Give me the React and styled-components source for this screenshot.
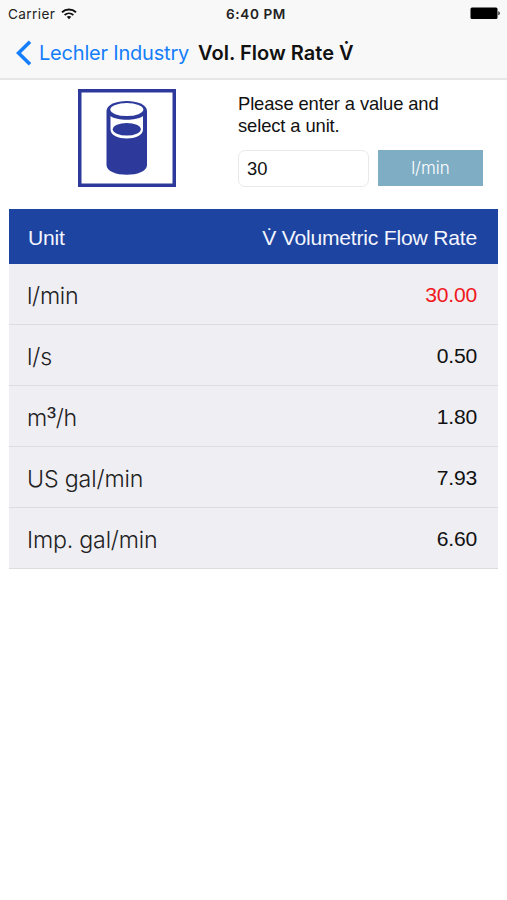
import React, { useState } from "react";
import styled, { createGlobalStyle } from "styled-components";

const GlobalStyle = createGlobalStyle`
	* {
		box-sizing: border-box;
	}

	body {
		margin: 0;
		background: #fff;
		font-family: "Liberation Sans", Arial, sans-serif;
		color: #111;
	}
`;

const Screen = styled.div`
	width: 507px;
	height: 900px;
	overflow: hidden;
	background: #fff;
`;

const TopArea = styled.header`
	height: 80px;
	background: #f8f8f8;
	border-bottom: 2px solid #e6e6e6;
	font-family: Inter, sans-serif;
`;

const StatusBar = styled.div`
	display: grid;
	grid-template-columns: 1fr auto 1fr;
	align-items: center;
	height: 27px;
	padding: 0 7px 0 8px;
	font-size: 13.6px;
	color: #222;
`;

const Carrier = styled.div`
	display: flex;
	align-items: center;
	gap: 6px;
	letter-spacing: 0.4px;
`;

const Clock = styled.div`
	font-weight: 600;
	letter-spacing: 0.6px;
	padding-left: 4px;
`;

const Battery = styled.svg`
	justify-self: end;
`;

const NavBar = styled.nav`
	display: flex;
	align-items: center;
	height: 51px;
	padding-left: 16px;
`;

const BackButton = styled.button`
	display: flex;
	align-items: center;
	gap: 7px;
	width: 182px;
	padding: 0;
	border: none;
	background: none;
	font: 400 20px Inter, sans-serif;
	letter-spacing: ${(props) => props.$tracking}px;
	white-space: nowrap;
	color: #147efb;
`;

const PageTitle = styled.h1`
	margin: 0;
	font-size: 20px;
	font-weight: 600;
	letter-spacing: 0.03px;
	white-space: nowrap;
	color: #111;
`;

const Entry = styled.section`
	display: flex;
	height: 129px;
	padding: 9px 0 0 78px;
`;

const Form = styled.div`
	width: 245px;
	margin-left: 62px;
	padding-top: 4px;
`;

const Prompt = styled.p`
	margin: 0 0 14px;
	font-size: 18.4px;
	line-height: 21.5px;
	letter-spacing: -0.12px;
`;

const Fields = styled.div`
	display: flex;
	gap: 9px;
`;

const ValueInput = styled.input`
	width: 131px;
	height: 37px;
	padding: 0 8px;
	border: 1px solid #e9e9e9;
	border-radius: 7px;
	outline: none;
	background: #fff;
	font: 18.4px "Liberation Sans", Arial, sans-serif;
	color: #111;
`;

const UnitButton = styled.button`
	width: 105px;
	height: 36px;
	padding: 0;
	border: none;
	background: #7eadc4;
	font: 300 17px Inter, "Liberation Sans", sans-serif;
	color: #fff;
`;

const Table = styled.section`
	width: 489px;
	margin-left: 9px;
`;

const TableHead = styled.div`
	display: flex;
	justify-content: space-between;
	align-items: center;
	height: 55px;
	padding: 2px 21px 0 19px;
	background: #1d44a0;
	font-size: 21.1px;
	letter-spacing: -0.2px;
	color: #f4f6ff;
`;

const Row = styled.div`
	display: flex;
	justify-content: space-between;
	align-items: center;
	height: 61px;
	padding: 2px 21px 0 18px;
	border-bottom: 1px solid #dddde1;
	background: #efeef3;
`;

const UnitName = styled.span`
	padding-top: 2px;
	font: 300 23.2px Inter, "Liberation Sans", sans-serif;
	letter-spacing: ${(props) => props.$tracking}px;
	color: #222;
`;

const Power = styled.span`
	font-family: "Liberation Sans", Arial, sans-serif;
	font-size: 27px;
	line-height: 1px;
`;

const Amount = styled.span`
	font-size: 21.1px;
	letter-spacing: -0.2px;
	color: ${(props) => (props.$active ? "#f01820" : "#111")};
`;

const rows = [
	{ unit: "l/min", amount: "30.00", tracking: -0.3 },
	{ unit: "l/s", amount: "0.50", tracking: -0.1 },
	{ unit: <>m<Power>³</Power>/h</>, amount: "1.80", tracking: -0.3 },
	{ unit: "US gal/min", amount: "7.93", tracking: -0.15 },
	{ unit: "Imp. gal/min", amount: "6.60", tracking: -0.2 },
];

function WifiIcon() {
	return (
		<svg width="16" height="12" viewBox="0 0 16 12" fill="none" stroke="#111">
			<path d="M1 4.2C5 .6 11 .6 15 4.2" strokeWidth="2" />
			<path d="M3.6 7C6.2 4.7 9.8 4.7 12.4 7" strokeWidth="1.8" />
			<path d="M5.7 8.8C7.1 7.6 8.9 7.6 10.3 8.8L8 11.2Z" fill="#111" stroke="none" />
		</svg>
	);
}

function GlassIcon() {
	return (
		<svg width="98" height="98" viewBox="0 0 98 98">
			<rect x="1.75" y="1.75" width="94.5" height="94.5" fill="#fff" stroke="#2e3a9b" strokeWidth="3.5" />
			<path d="M28.5 22C28.5 8.5 69 8.5 69 22V76C69 89 28.5 89 28.5 76Z" fill="#2e3a9b" />
			<ellipse cx="48.8" cy="20.6" rx="16.5" ry="6.5" fill="#fff" />
			<path d="M32.5 27C39 32 58.5 32 65 27V40.5C65 52.5 32.5 52.5 32.5 40.5Z" fill="#fff" />
			<ellipse cx="48.8" cy="40.2" rx="14" ry="6.3" fill="#2e3a9b" />
		</svg>
	);
}

function App() {
	const [value, setValue] = useState("30");

	return (
		<>
			<GlobalStyle />
			<Screen>
				<TopArea>
					<StatusBar>
						<Carrier>
							Carrier
							<WifiIcon />
						</Carrier>
						<Clock>6:40 PM</Clock>
						<Battery width="30" height="13" viewBox="0 0 30 13">
							<rect x="0.5" y="0.5" width="27" height="11.5" rx="1.5" fill="#000" />
							<path d="M28.3 4.2C30.3 4.8 30.3 7.7 28.3 8.3Z" fill="#222" />
						</Battery>
					</StatusBar>
					<NavBar>
						<BackButton $tracking={-0.2}>
							<svg width="16" height="26" viewBox="0 0 16 26" fill="none">
								<path d="M14 1.8L2.5 13L14 24.2" stroke="#147efb" strokeWidth="3.6" />
							</svg>
							Lechler Industry
						</BackButton>
						<PageTitle>Vol. Flow Rate V̇</PageTitle>
					</NavBar>
				</TopArea>
				<Entry>
					<GlassIcon />
					<Form>
						<Prompt>
							Please enter a value and
							<br />
							select a unit.
						</Prompt>
						<Fields>
							<ValueInput value={value} onChange={(e) => setValue(e.target.value)} />
							<UnitButton>l/min</UnitButton>
						</Fields>
					</Form>
				</Entry>
				<Table>
					<TableHead>
						<span>Unit</span>
						<span>V̇ Volumetric Flow Rate</span>
					</TableHead>
					{rows.map((row, index) => (
						<Row key={row.amount}>
							<UnitName $tracking={row.tracking}>{row.unit}</UnitName>
							<Amount $active={index === 0}>{row.amount}</Amount>
						</Row>
					))}
				</Table>
			</Screen>
		</>
	);
}

export default App;
